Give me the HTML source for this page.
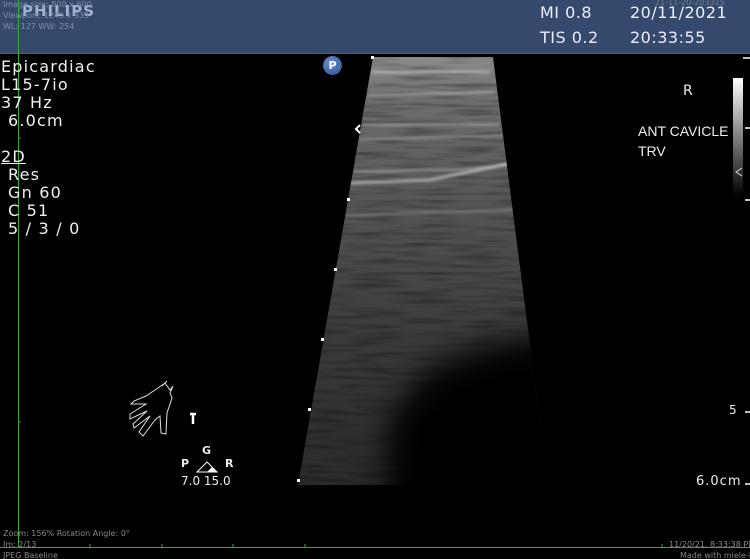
<!DOCTYPE html>
<html><head><meta charset="utf-8"><style>
html,body{margin:0;padding:0;background:#000;width:750px;height:559px;overflow:hidden;position:relative;font-family:"DejaVu Sans","Liberation Sans",sans-serif;color:#eee}
.t{position:absolute;white-space:nowrap}
#hdr{position:absolute;left:0;top:0;width:750px;height:53px;background:#34496b;border-bottom:1px solid #4a6288}
.l{font-size:16px;line-height:18px;color:#f0f0f0;letter-spacing:1.2px}
.s{font-size:8px;color:#888}
</style></head><body>
<div id="hdr"></div>
<div class="t" style="left:22px;top:2px;font-size:15px;font-weight:bold;color:#9fb3d4;letter-spacing:1px">PHILIPS</div>
<div class="t s" style="left:3px;top:0px;color:#7f8fa8">Image size: 800 x 600</div>
<div class="t s" style="left:3px;top:11px;color:#7f8fa8">Viewport: 1245 x 933</div>
<div class="t s" style="left:3px;top:22px;color:#7f8fa8">WL: 127 WW: 254</div>
<div class="t" style="left:540px;top:3px;font-size:16px;color:#eef;letter-spacing:0.5px">MI 0.8</div>
<div class="t" style="left:540px;top:28px;font-size:16px;color:#eef;letter-spacing:0.5px">TIS 0.2</div>
<div class="t" style="left:630px;top:3px;font-size:16px;color:#eef;letter-spacing:0.5px">20/11/2021</div>
<div class="t" style="left:630px;top:28px;font-size:16px;color:#eef;letter-spacing:0.5px">20:33:55</div>
<div class="t s" style="left:655px;top:-2px;color:#6c7d98">21-11-20-203315</div>

<div style="position:absolute;left:18px;top:0;width:1px;height:548px;background:#3ca83c"></div>
<div style="position:absolute;left:0;top:547px;width:750px;height:1px;background:#3ca83c"></div>

<div class="t l" style="left:1px;top:58px">Epicardiac</div>
<div class="t l" style="left:1px;top:76px">L15-7io</div>
<div class="t l" style="left:1px;top:94px">37 Hz</div>
<div class="t l" style="left:8px;top:112px">6.0cm</div>
<div class="t l" style="left:1px;top:148px;text-decoration:underline">2D</div>
<div class="t l" style="left:8px;top:166px">Res</div>
<div class="t l" style="left:8px;top:184px">Gn 60</div>
<div class="t l" style="left:8px;top:202px">C 51</div>
<div class="t l" style="left:8px;top:220px">5 / 3 / 0</div>

<div style="position:absolute;left:323px;top:56px;width:19px;height:19px;border-radius:50%;background:radial-gradient(circle at 40% 35%,#6b8fd0,#2d4d8f);color:#fff;font-size:11px;font-weight:bold;text-align:center;line-height:19px">P</div>

<svg style="position:absolute;left:0;top:0" width="750" height="559">
<defs>
<linearGradient id="g" x1="0" y1="0" x2="0" y2="1">
<stop offset="0" stop-color="#8e8e8e"/><stop offset="0.1" stop-color="#6e6e6e"/><stop offset="0.35" stop-color="#555"/><stop offset="0.65" stop-color="#3a3a3a"/><stop offset="1" stop-color="#2a2a2a"/></linearGradient>
<linearGradient id="sb" x1="0" y1="0" x2="0" y2="1"><stop offset="0" stop-color="#fff"/><stop offset="1" stop-color="#000"/></linearGradient>
<clipPath id="cp"><polygon points="373,57 493,57 548,485 298,485"/></clipPath>
<filter id="bl" x="-30%" y="-30%" width="160%" height="160%"><feGaussianBlur stdDeviation="16"/></filter>
<filter id="bl2"><feGaussianBlur stdDeviation="1.2"/></filter>
<filter id="nz" x="0" y="0" width="100%" height="100%"><feTurbulence type="fractalNoise" baseFrequency="0.02 0.25" numOctaves="2" seed="3"/><feColorMatrix type="matrix" values="0 0 0 0 0  0 0 0 0 0  0 0 0 0 0  0 0 0 -1.4 0.8"/></filter>
</defs>
<g clip-path="url(#cp)">
<rect x="290" y="55" width="270" height="435" fill="url(#g)"/>
<rect x="290" y="55" width="270" height="435" filter="url(#nz)" opacity="0.5"/>
<g stroke="#e0e0e0" fill="none" filter="url(#bl2)" stroke-opacity="0.45">
<path d="M372,72 L490,72" stroke-width="3"/>
<path d="M368,95 L495,92" stroke-width="2"/>
<path d="M363,125 L500,125" stroke-width="2"/>
<path d="M358,140 L505,135" stroke-width="1.5"/>
<path d="M353,172 L450,170 L510,165" stroke-width="2"/>
<path d="M350,183 L430,180 L512,163" stroke-width="3" stroke-opacity="0.6"/>
<path d="M345,215 L515,210" stroke-width="1.5"/>
</g>
<polygon points="385,520 388,420 430,368 490,345 545,335 600,330 600,520" fill="#000" filter="url(#bl)"/>
</g>
<g fill="#fff"><rect x="371" y="56" width="3" height="3"/><rect x="347" y="198" width="3" height="3"/><rect x="334" y="268" width="3" height="3"/><rect x="321" y="338" width="3" height="3"/><rect x="308" y="408" width="3" height="3"/><rect x="297" y="479" width="3" height="3"/></g>
<path d="M360,125 L356,129 L360,133" stroke="#fff" stroke-width="2" fill="none"/>
<rect x="733" y="78" width="10" height="118" fill="url(#sb)"/>
<g stroke="#fff" stroke-width="1.5"><path d="M743,58 L750,58"/><path d="M745,128 L750,128"/><path d="M745,200 L750,200"/><path d="M745,412 L750,412"/><path d="M745,484 L750,484"/></g>
<path d="M742,176 L736,172 L742,168" stroke="#ddd" fill="none"/>
<g stroke="#3ca83c"><path d="M18,138 L21,138"/><path d="M18,422 L21,422"/><path d="M90,544 L90,548"/><path d="M162,544 L162,548"/><path d="M233,544 L233,548"/><path d="M305,544 L305,548"/><path d="M662,544 L662,548"/></g>
<g stroke="#ddd" stroke-width="1" fill="none">
<path d="M165,383 L158,388 L146,396 L134,401 L131,404 L146,404 L130,414 L130,419 L147,411 L133,424 L134,428 L150,416 L139,432 L143,436 L155,420 L160,416 L161,433 L166,434 L167,413 L172,398 L170,393 L173,386 L170,390 L165,383 M162,386 L167,381"/>
</g>
<path d="M190,414 L196,414 M193,414 L193,424" stroke="#fff" stroke-width="2.5"/>
<path d="M197,472 L207,462 L217,472 Z" stroke="#fff" fill="none"/>
<path d="M207,472 L212,467 L217,472 Z" fill="#fff"/>
</svg>

<div class="t" style="left:683px;top:83px;font-size:14px">R</div>
<div class="t" style="left:638px;top:123px;font-size:14px;font-family:'Liberation Sans',sans-serif">ANT CAVICLE</div>
<div class="t" style="left:638px;top:143px;font-size:14px;font-family:'Liberation Sans',sans-serif">TRV</div>
<div class="t" style="left:729px;top:403px;font-size:12px">5</div>
<div class="t" style="left:696px;top:474px;font-size:13px;letter-spacing:1px">6.0cm</div>
<div class="t" style="left:202px;top:444px;font-size:11px;font-weight:bold">G</div>
<div class="t" style="left:181px;top:457px;font-size:11px;font-weight:bold">P</div>
<div class="t" style="left:225px;top:457px;font-size:11px;font-weight:bold">R</div>
<div class="t" style="left:181px;top:474px;font-size:12px">7.0&nbsp;15.0</div>
<div class="t s" style="left:3px;top:529px">Zoom: 156% Rotation Angle: 0°</div>
<div class="t s" style="left:3px;top:540px">Im: 2/13</div>
<div class="t s" style="left:3px;top:551px">JPEG Baseline</div>
<div class="t s" style="left:669px;top:540px">11/20/21, 8:33:38 PM</div>
<div class="t s" style="left:680px;top:551px">Made with miele-lxh</div>
</body></html>
